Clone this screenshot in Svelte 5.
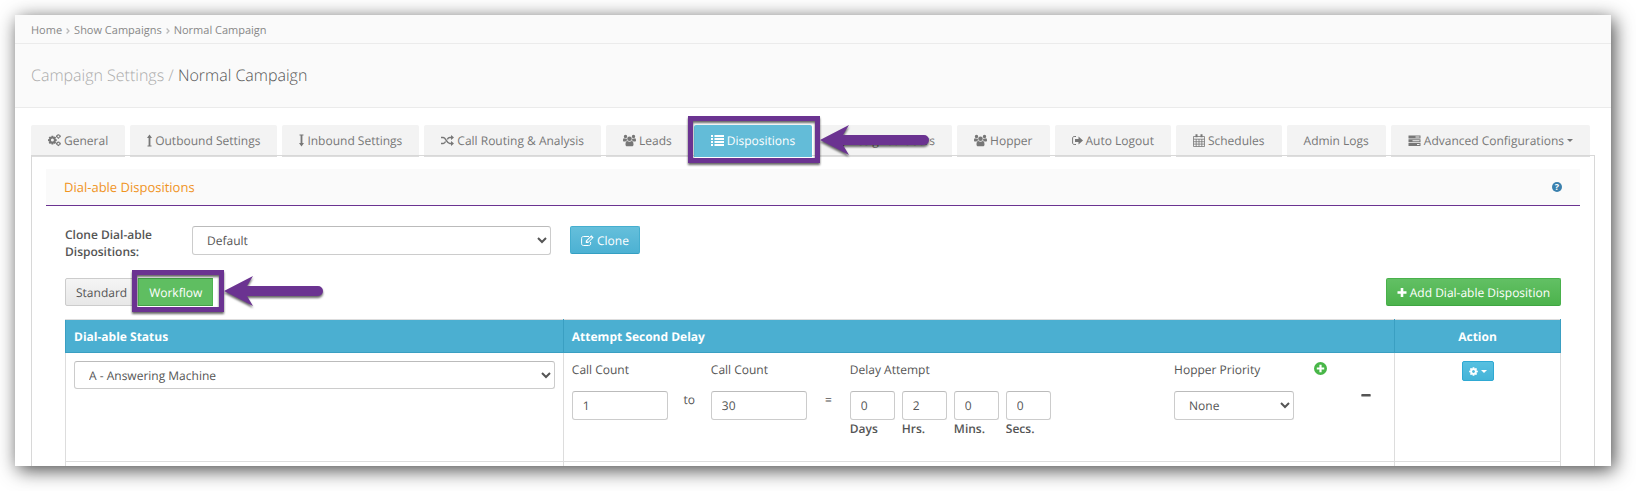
<script lang="ts">
    type Shape = { box: string; fill?: string; line?: string; weight?: number };

    const cog =
        'M1152 896q0-106-75-181t-181-75-181 75-75 181 75 181 181 75 181-75 75-181zm512-109v222q0 12-8 23t-20 13l-185 28q-19 54-39 91 35 50 107 138 10 12 10 25t-9 23q-27 37-99 108t-94 71q-12 0-26-9l-138-108q-44 23-91 38-16 136-29 186-7 28-36 28h-222q-14 0-24.5-8.5t-11.5-21.5l-28-184q-49-16-90-37l-141 107q-10 9-25 9-14 0-25-11-126-114-165-168-7-10-7-23 0-12 8-23 15-21 51-66.5t54-70.5q-27-50-41-99l-183-27q-13-2-21-12.5t-8-23.5v-222q0-12 8-23t19-13l186-28q14-46 39-92-40-57-107-138-10-12-10-24 0-10 9-23 26-36 98.5-107.5t94.5-71.5q13 0 26 10l138 107q44-23 91-38 16-136 29-186 7-28 36-28h222q14 0 24.5 8.5t11.5 21.5l28 184q49 16 90 37l142-107q9-9 24-9 13 0 25 10 129 119 165 170 7 8 7 22 0 12-8 23-15 21-51 66.5t-54 70.5q26 50 41 98l183 28q13 2 21 12.5t8 23.5z';

    const icons: Record<string, Shape> = {
        cogs: {
            box: '0 0 13 13',
            fill: 'M3.500 1.800h1.800l.3 1.300 1.300-.7 1.200 1.200-.7 1.300 1.300.3v1.900l-1.300.3.7 1.300-1.200 1.200-1.300-.7-.3 1.300H3.500l-.3-1.300-1.300.7L.7 8.700l.7-1.300L0 7.100V5.200l1.400-.3L.7 3.600l1.200-1.200 1.300.7zM4.400 4.600a1.500 1.500 0 1 0 0 3 1.500 1.500 0 0 0 0-3zM10.400.3l1 .2.3.7 1.100.3v1.600l-1.100.3-.3.700-1 .9-1-.9-.5-.7-.9-.3V1.500l.9-.3.5-.7zM10.400 1.500a.9.900 0 1 0 0 1.800.9.900 0 0 0 0-1.800zM10.400 7.600l1 .2.3.700 1.100.3v1.600l-1.100.3-.3.700-1 .9-1-.9-.5-.7-.9-.3V8.800l.9-.3.5-.7zM10.400 8.800a.9.900 0 1 0 0 1.800.9.900 0 0 0 0-1.800z'
        },
        up: { box: '0 0 5 13', fill: 'M2.500.5L5 4H3.400v7.500H4.500v1H.5v-1h1.100V4H0z' },
        down: { box: '0 0 5 13', fill: 'M2.500 12.500L5 9H3.400V1.500H4.500v-1H.5v1h1.100V9H0z' },
        random: {
            box: '0 0 13 13',
            line: 'M0 3.500h2.200c2.800 0 3.400 6 6.600 6H11M0 9.500h2.200c1.200 0 1.800-.9 2.400-2M6.300 5.300c.6-1 1.300-1.800 2.500-1.800H11',
            weight: 1.5,
            fill: 'M10 1l3 2.500-3 2.500zM10 7l3 2.500-3 2.500z'
        },
        users: {
            box: '0 0 13 13',
            fill: 'M6.500 2.400a2.300 2.300 0 1 1 0 4.600 2.300 2.300 0 0 1 0-4.600zM2.500.8a1.700 1.700 0 1 1 0 3.400 1.700 1.700 0 0 1 0-3.400zM10.500.8a1.700 1.700 0 1 1 0 3.400 1.700 1.700 0 0 1 0-3.400zM0 6.400C0 5 .3 4.300 1 4.300c.9.500 2 .5 2.700.2C3.700 5.300 4 6 4.500 6.500 3.600 6.500 3 7 2.600 7.400H1C.4 7.400 0 7 0 6.400zM13 6.400c0-1.400-.3-2.100-1-2.100-.9.500-2 .5-2.700.2 0 .8-.3 1.500-.8 2 .9 0 1.500.5 1.900.9H12c.6 0 1-.4 1-1zM2.500 10.800c0-2.300.4-3.900 1.800-3.900 1.400 1 3 1 4.400 0 1.400 0 1.800 1.600 1.800 3.900 0 .9-.6 1.500-1.500 1.500H4c-.9 0-1.500-.6-1.500-1.500z'
        },
        list: {
            box: '0 0 13 13',
            fill: 'M0 1h2v2H0zM3.500 1H13v2H3.500zM0 4h2v2H0zM3.500 4H13v2H3.500zM0 7h2v2H0zM3.500 7H13v2H3.500zM0 10h2v2H0zM3.500 10H13v2H3.500z'
        },
        logout: {
            box: '0 0 11 13',
            line: 'M4 2.500H2.200C1.200 2.500.6 3.200.6 4v5c0 .9.700 1.500 1.600 1.500H4',
            weight: 1,
            fill: 'M6.500 2.500L11 6.500l-4.500 4V8H3V5h3.500z'
        },
        calendar: {
            box: '0 0 12 13',
            line: 'M.5 2.500h11v10H.5zM.5 5.200h11M.5 7.700h11M.5 10.100h11M3.200 5v7.500M6 5v7.500M8.800 5v7.500',
            weight: 0.8,
            fill: 'M2.500.2h2v3h-2zM7.500.2h2v3h-2z'
        },
        server: {
            box: '0 0 13 13',
            fill: 'M.5 1.500h12v3H.5zM7.500 2.500h4v1h-4zM.5 5.300h12v3H.5zM4.500 6.300h7v1h-7zM.5 9.100h12v3H.5zM9 10.100h2.500v1H9z'
        },
        edit: {
            box: '0 0 13 13',
            line: 'M8 2.500H2.500c-1.200 0-1.900.7-1.900 1.800v5.400c0 1.100.700 1.800 1.900 1.800h5.200c1.200 0 1.900-.7 1.900-1.800V8',
            weight: 1,
            fill: 'M10.300 1.200l2.300 2.300-5.500 5.500H4.800V6.700zM6 6.900l1 1 4-4-1-1z'
        },
        plus: { box: '0 0 10 13', fill: 'M3.700 2h2.600v3.200h3.200v2.600H6.300V11H3.700V7.800H.5V5.200h3.200z' },
        minus: { box: '0 0 10 13', fill: 'M1 5h8q.7 0 .7.700v1.200q0 .7-.7.700H1q-.7 0-.7-.7V5.700Q.3 5 1 5z' },
        add: {
            box: '0 0 13 13',
            fill: 'M6.500 0a6.500 6.500 0 1 1 0 13 6.500 6.500 0 0 1 0-13zM5.400 2.800v2.600H2.800v2.200h2.600v2.600h2.200V7.600h2.600V5.400H7.600V2.800z'
        },
        cog: { box: '100 100 1592 1592', fill: cog },
        chevron: { box: '0 0 4 13', line: 'M.6 4.500l2.400 2.500-2.400 2.500', weight: 1.3 }
    };

    const tabs = [
        { label: 'General', icon: 'cogs' },
        { label: 'Outbound Settings', icon: 'up' },
        { label: 'Inbound Settings', icon: 'down' },
        { label: 'Call Routing & Analysis', icon: 'random' },
        { label: 'Leads', icon: 'users' },
        { label: 'Dispositions', icon: 'list', active: true },
        { label: 'Assigned Users', icon: 'users' },
        { label: 'Hopper', icon: 'users' },
        { label: 'Auto Logout', icon: 'logout' },
        { label: 'Schedules', icon: 'calendar' },
        { label: 'Admin Logs' },
        { label: 'Advanced Configurations', icon: 'server', menu: true }
    ];

    const delay = $state([
        { unit: 'Days', value: '0' },
        { unit: 'Hrs.', value: '2' },
        { unit: 'Mins.', value: '0' },
        { unit: 'Secs.', value: '0' }
    ]);

    let from = $state('1');
    let to = $state('30');
</script>

{#snippet icon(name: string)}
    {@const s = icons[name]}
    <svg class="icon {name}" viewBox={s.box} aria-hidden="true">
        {#if s.line}
            <path d={s.line} fill="none" stroke="currentColor" stroke-width={s.weight} />
        {/if}
        {#if s.fill}
            <path d={s.fill} fill="currentColor" fill-rule="evenodd" />
        {/if}
    </svg>
{/snippet}

{#snippet callout(length: number)}
    <span class="callout">
        <svg class="arrow" width={length} height="30" aria-hidden="true">
            <path d="M0 15L29 0L23 10H{length - 5}a5 5 0 0 1 0 10H23L29 30Z" fill="#6b3391" />
        </svg>
    </span>
{/snippet}

<div class="page">
    <div class="window">
        <nav class="breadcrumb">
            <a href="#home">Home</a>
            {@render icon('chevron')}
            <a href="#campaigns">Show Campaigns</a>
            {@render icon('chevron')}
            <a href="#campaign">Normal Campaign</a>
        </nav>
        <header>
            <h1><span>Campaign Settings /</span> Normal Campaign</h1>
        </header>

        <main>
            <ul class="tabs">
                {#each tabs as tab}
                    <li class:active={tab.active}>
                        <a href="#tab">
                            {#if tab.icon}{@render icon(tab.icon)}{/if}
                            <span>{tab.label}</span>
                            {#if tab.menu}<i class="caret"></i>{/if}
                        </a>
                        {#if tab.active}{@render callout(109)}{/if}
                    </li>
                {/each}
            </ul>

            <section class="pane">
                <div class="section-head">
                    <h2>Dial-able Dispositions</h2>
                    <button class="help" aria-label="Help">?</button>
                </div>

                <div class="body">
                    <div class="clone">
                        <label for="clone">Clone Dial-able Dispositions:</label>
                        <select id="clone"><option>Default</option></select>
                        <button class="btn info">{@render icon('edit')} Clone</button>
                    </div>

                    <div class="toolbar">
                        <div class="modes">
                            <button class="btn plain">Standard</button>
                            <div class="mode">
                                <button class="btn current">Workflow</button>
                                {@render callout(99)}
                            </div>
                        </div>
                        <button class="btn success">{@render icon('plus')} Add Dial-able Disposition</button>
                    </div>

                    <table>
                        <colgroup>
                            <col class="c-status" />
                            <col />
                            <col class="c-action" />
                        </colgroup>
                        <thead>
                            <tr>
                                <th>Dial-able Status</th>
                                <th>Attempt Second Delay</th>
                                <th class="center">Action</th>
                            </tr>
                        </thead>
                        <tbody>
                            <tr>
                                <td>
                                    <select class="status" aria-label="Dial-able Status">
                                        <option>A - Answering Machine</option>
                                    </select>
                                </td>
                                <td>
                                    <div class="attempt">
                                        <div class="field">
                                            <label for="from">Call Count</label>
                                            <input id="from" bind:value={from} />
                                        </div>
                                        <span class="sign">to</span>
                                        <div class="field">
                                            <label for="to">Call Count</label>
                                            <input id="to" bind:value={to} />
                                        </div>
                                        <span class="sign">=</span>
                                        <div class="field">
                                            <span>Delay Attempt</span>
                                            <div class="units">
                                                {#each delay as d}
                                                    <label><input bind:value={d.value} />{d.unit}</label>
                                                {/each}
                                            </div>
                                        </div>
                                        <div class="field">
                                            <label for="priority">Hopper Priority</label>
                                            <select id="priority"><option>None</option></select>
                                        </div>
                                        <button class="bare green" aria-label="Add attempt">{@render icon('add')}</button>
                                        <button class="bare remove" aria-label="Remove attempt">{@render icon('minus')}</button>
                                    </div>
                                </td>
                                <td class="center">
                                    <button class="btn info small" aria-label="Actions">
                                        {@render icon('cog')}<i class="caret"></i>
                                    </button>
                                </td>
                            </tr>
                            <tr><td></td><td></td><td></td></tr>
                        </tbody>
                    </table>
                </div>
            </section>
        </main>
    </div>
</div>

<style>
    :global(body) {
        background: #fff;
        overflow: hidden;
    }

    .page {
        padding: 15px 25px 25px 15px;
        font: 12px/17px "Open Sans", sans-serif;
        text-rendering: geometricPrecision;
        color: #555;
    }

    .page :global(*) {
        box-sizing: border-box;
    }

    .window {
        height: calc(100vh - 40px);
        overflow: hidden;
        background: #fff;
        box-shadow: 3px 4px 18px rgba(0, 0, 0, 0.72);
    }

    a {
        color: inherit;
        text-decoration: none;
    }

    .icon {
        width: auto;
        height: 13px;
        flex: none;
        display: block;
    }

    .breadcrumb {
        display: flex;
        align-items: center;
        gap: 4px;
        height: 29px;
        padding: 2px 16px 0;
        background: #fafafa;
        border-bottom: 1px solid #ebebeb;
        font-size: 11px;
        color: #888;
    }

    .breadcrumb .icon {
        color: #bbb;
    }

    header {
        padding: 20px 16px;
        background: #fafafa;
        border-bottom: 1px solid #ebebeb;
    }

    h1 {
        margin: 0;
        font-size: 16px;
        line-height: 23px;
        font-weight: 300;
    }

    h1 span {
        color: #aaa;
    }

    main {
        padding: 17px 16px 0;
    }

    .tabs {
        display: flex;
        gap: 5px;
        margin: 0 0 -2px;
        padding: 0;
        list-style: none;
        white-space: nowrap;
    }

    .tabs li {
        position: relative;
    }

    .tabs a {
        display: flex;
        align-items: center;
        gap: 3px;
        height: 32px;
        padding: 0 17px;
        background: #f3f3f3;
        border-bottom: 1px solid #ddd;
        border-radius: 2px 2px 0 0;
        color: #777;
    }

    .tabs .active {
        z-index: 2;
    }

    .tabs .active a {
        background: #63bcd8;
        border-color: #63bcd8;
        color: #fff;
    }

    .caret {
        border: 3px solid transparent;
        border-top-color: currentColor;
        border-bottom: 0;
    }

    .callout {
        position: absolute;
        z-index: 3;
        inset: -9px -8px -6px -6px;
        border: 5px solid #6b3391;
        filter: drop-shadow(0 2px 1px rgba(0, 0, 0, 0.6));
        pointer-events: none;
    }

    .arrow {
        position: absolute;
        left: calc(100% + 5px);
        top: calc(50% - 15px);
    }

    .pane {
        position: relative;
        padding: 13px 14px;
        border: 1px solid #d8d8d8;
    }

    .section-head {
        display: flex;
        justify-content: space-between;
        align-items: center;
        height: 37px;
        padding: 0 18px;
        background: #fafafa;
        border-bottom: 1px solid #6b3391;
    }

    h2 {
        margin: 0;
        font-size: 13px;
        font-weight: 400;
        color: #f0941f;
    }

    .help {
        width: 10px;
        height: 10px;
        padding: 0;
        border: 0;
        border-radius: 50%;
        background: #3a80ad;
        color: #fff;
        font: 700 9px/10px "Open Sans", sans-serif;
    }

    .body {
        padding: 20px 19px;
    }

    .clone {
        display: grid;
        grid-template-columns: 108px 24% auto;
        column-gap: 19px;
        align-items: start;
        justify-content: start;
    }

    .clone label {
        font-weight: 600;
    }

    input,
    select {
        display: block;
        width: 100%;
        height: 29px;
        padding: 0 10px;
        border: 1px solid #ccc;
        border-top-color: #bbb;
        border-radius: 3px;
        background: #fff;
        color: #555;
        font: 400 12px/17px "Open Sans", sans-serif;
        text-rendering: inherit;
    }

    .btn {
        display: flex;
        align-items: center;
        gap: 3px;
        height: 28px;
        padding: 0 10px;
        border: 1px solid #ccc;
        border-radius: 2px;
        color: #fff;
        font: 400 12px/17px "Open Sans", sans-serif;
        text-rendering: inherit;
        white-space: nowrap;
    }

    .info {
        background: linear-gradient(#65bfdb, #4cb1d3);
        border-color: #45aecf #45aecf #349fc2;
    }

    .success {
        background: linear-gradient(#62c064, #4cb34c);
        border-color: #49b14b #49b14b #3fa542;
    }

    .plain {
        background: linear-gradient(#f5f5f5, #e8e8e8);
        color: #555;
        border-radius: 2px 0 0 2px;
    }

    .current {
        background: #5fbe61;
        border-color: #43a047 #4fb352;
        border-radius: 0;
    }

    .small {
        height: 20px;
        padding: 0 6px;
        border-color: #2fa9d3;
        background: linear-gradient(#58c0e0, #45b4d8);
    }

    .small .icon {
        height: 9px;
    }

    .toolbar {
        display: flex;
        justify-content: space-between;
        padding: 18px 0 13px;
    }

    .modes {
        display: flex;
    }

    .mode {
        position: relative;
    }

    .mode .callout {
        inset: -8px -11px -6px -6px;
    }

    table {
        width: 100%;
        table-layout: fixed;
        border-collapse: collapse;
    }

    .c-status {
        width: 33.3%;
    }

    .c-action {
        width: 11.1%;
    }

    th {
        height: 33px;
        padding: 0 8px;
        background: #4bafd1;
        border: 1px solid #3a9fc2;
        border-top-color: #ddd;
        color: #fff;
        text-align: left;
        font-weight: 700;
    }

    td {
        height: 28px;
        padding: 8px;
        border: 1px solid #ddd;
        vertical-align: top;
    }

    .center {
        text-align: center;
    }

    .center .btn {
        margin: 0 auto;
    }

    .status {
        height: 28px;
    }

    .attempt {
        display: grid;
        grid-template-columns: 96px 43px 96px 43px minmax(208px, 1fr) 120px 52px 40px;
        min-height: 92px;
    }

    .field > label,
    .field > span {
        display: block;
        margin-bottom: 13px;
    }

    .sign {
        padding-top: 30px;
        text-align: center;
    }

    .units {
        display: flex;
        gap: 7px;
    }

    .units label {
        width: 45px;
        font-weight: 600;
    }

    .bare {
        display: flex;
        justify-content: center;
        align-self: start;
        padding: 1px 0;
        border: 0;
        background: none;
        color: #555;
    }

    .green {
        color: #48b648;
    }

    .remove {
        padding-top: 28px;
    }
</style>
